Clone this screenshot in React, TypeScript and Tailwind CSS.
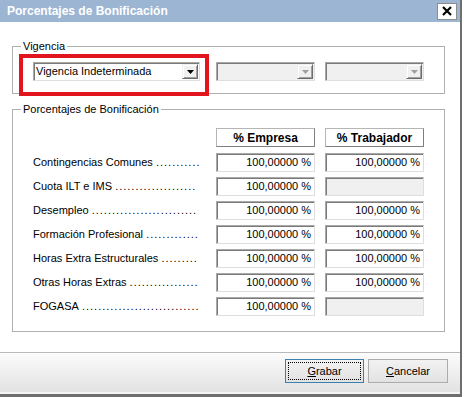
import React from 'react';

// puntos: cantidad de puntos de relleno hasta la columna de campos
const filas = [
  { etiqueta: 'Contingencias Comunes', puntos: 11, empresa: '100,00000 %', trabajador: '100,00000 %' },
  { etiqueta: 'Cuota ILT e IMS', puntos: 20, empresa: '100,00000 %', trabajador: null },
  { etiqueta: 'Desempleo', puntos: 26, empresa: '100,00000 %', trabajador: '100,00000 %' },
  { etiqueta: 'Formación Profesional', puntos: 13, empresa: '100,00000 %', trabajador: '100,00000 %' },
  { etiqueta: 'Horas Extra Estructurales', puntos: 9, empresa: '100,00000 %', trabajador: '100,00000 %' },
  { etiqueta: 'Otras Horas Extras', puntos: 17, empresa: '100,00000 %', trabajador: '100,00000 %' },
  { etiqueta: 'FOGASA', puntos: 29, empresa: '100,00000 %', trabajador: null },
];

const Flecha = ({ disabled }: { disabled?: boolean }) => (
  <div className="flex h-[15px] w-[16px] items-center justify-center border border-[#f0f0f0] border-r-[#6b6b6b] border-b-[#6b6b6b] bg-[#f0f0f0] shadow-[inset_1px_1px_0_#fff,inset_-1px_-1px_0_#a0a0a0]">
    <svg width="7" height="4" viewBox="0 0 7 4">
      <polygon points="0,0 7,0 3.5,4" fill={disabled ? '#a0a0a0' : '#000'} />
    </svg>
  </div>
);

const Combo = ({ texto, clase, disabled }: { texto?: string; clase: string; disabled?: boolean }) => (
  <div
    className={`flex h-[19px] ${clase} items-center justify-between border border-[#a9a9a9] border-r-[#dedede] border-b-[#dedede] pr-[1px] pl-[2px] shadow-[inset_1px_1px_0_#7a7a7a] ${
      disabled ? 'bg-[#f0f0f0]' : 'bg-white'
    }`}
  >
    <span className="whitespace-nowrap">{texto}</span>
    <Flecha disabled={disabled} />
  </div>
);

const Campo = ({ valor }: { valor: string | null }) => (
  <div
    className={`flex h-[19px] w-[99px] items-center justify-end border border-[#a9a9a9] border-r-[#dedede] border-b-[#dedede] pr-[3px] shadow-[inset_1px_1px_0_#7a7a7a] ${
      valor ? 'bg-white' : 'bg-[#f0f0f0]'
    }`}
  >
    {valor}
  </div>
);

const Cabecera = ({ texto }: { texto: string }) => (
  <div className="flex h-[19px] w-[99px] items-center justify-center border border-[#b5b5b5] border-r-[#7f7f7f] border-b-[#7f7f7f] bg-white text-[12px] font-bold">
    {texto}
  </div>
);

const App: React.FC = () => {
  return (
    <div className="relative h-[397px] w-[464px] overflow-hidden bg-white font-['Liberation_Sans',Arial,sans-serif] text-[11px] text-black">
      <div className="flex h-[397px] w-[462px] flex-col border-r-2 border-b-[3px] border-[#6e6e6e]">
        {/* barra de título */}
        <div className="flex h-[22px] items-center bg-[#9cb5d3] pr-[3px] pl-[7px]">
          <span className="text-[12px] font-bold text-white">Porcentajes de Bonificación</span>
          <div className="ml-auto flex h-[17px] w-[20px] items-center justify-center border border-[#8d8d8d] bg-white">
            <svg width="10" height="10" viewBox="0 0 10 10">
              <path d="M1 1 L9 9 M9 1 L1 9" stroke="#000" strokeWidth="2.2" />
            </svg>
          </div>
        </div>

        {/* Vigencia */}
        <fieldset className="mt-[18px] ml-[12px] w-[432px] border border-[#b0b0b0] px-[20px] leading-[12px]">
          <legend className="-ml-[12px] px-[2px]">Vigencia</legend>
          <div className="mt-[10px] mb-[12px] flex leading-normal">
            <Combo texto="Vigencia Indeterminada" clase="w-[167px]" />
            <Combo clase="ml-[16px] w-[99px]" disabled />
            <Combo clase="ml-[10px] w-[99px]" disabled />
          </div>
        </fieldset>

        {/* Porcentajes */}
        <fieldset className="mt-[9px] ml-[12px] w-[432px] border border-[#b0b0b0] px-[20px] leading-[12px]">
          <legend className="-ml-[12px] px-[2px]">Porcentajes de Bonificación</legend>
          <div className="mt-[13px] mb-[15px] flex flex-col leading-normal">
            <div className="flex gap-[10px] pl-[183px]">
              <Cabecera texto="% Empresa" />
              <Cabecera texto="% Trabajador" />
            </div>
            <div className="mt-[6px] flex flex-col gap-[5px]">
              {filas.map((f) => (
                <div key={f.etiqueta} className="flex items-center">
                  <div className="w-[183px] whitespace-nowrap">
                    {f.etiqueta}&nbsp;
                    <span className="tracking-[1px]">{'.'.repeat(f.puntos)}</span>
                  </div>
                  <div className="flex gap-[10px]">
                    <Campo valor={f.empresa} />
                    <Campo valor={f.trabajador} />
                  </div>
                </div>
              ))}
            </div>
          </div>
        </fieldset>

        {/* pie */}
        <div className="mt-[20px] flex flex-1 justify-end gap-[4px] border-t border-[#b9b9b9] bg-gradient-to-b from-[#fcfcfc] to-[#e1e1e1] pt-[6px] pr-[12px] shadow-[inset_0_-2px_0_#f4f4f4]">
          <button className="relative flex h-[24px] w-[79px] items-center justify-center border border-[#3c7fb1] bg-gradient-to-b from-[#f2f2f2] to-[#e2e2e2]">
            <span className="pointer-events-none absolute inset-[2px] border border-dotted border-black" />
            <span>
              <span className="underline">G</span>rabar
            </span>
          </button>
          <button className="flex h-[24px] w-[80px] items-center justify-center border border-[#acacac] bg-gradient-to-b from-[#f2f2f2] to-[#e2e2e2]">
            <span>
              <span className="underline">C</span>ancelar
            </span>
          </button>
        </div>
      </div>

      {/* recuadro rojo de señalización */}
      <div className="absolute top-[54px] left-[19px] h-[42px] w-[190px] border-4 border-[#e2141e]" />
    </div>
  );
};

export default App;
